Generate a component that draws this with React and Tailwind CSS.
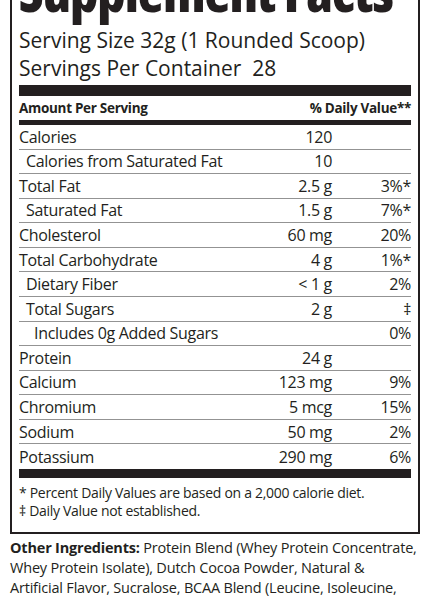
import React from 'react';

const rows = [
  { name: 'Calories', amt: '120', dv: '' },
  { name: 'Calories from Saturated Fat', amt: '10', dv: '', indent: 1 },
  { name: 'Total Fat', amt: '2.5 g', dv: '3%*' },
  { name: 'Saturated Fat', amt: '1.5 g', dv: '7%*', indent: 1 },
  { name: 'Cholesterol', amt: '60 mg', dv: '20%' },
  { name: 'Total Carbohydrate', amt: '4 g', dv: '1%*' },
  { name: 'Dietary Fiber', amt: '< 1 g', dv: '2%', indent: 1 },
  { name: 'Total Sugars', amt: '2 g', dv: '‡', indent: 1 },
  { name: 'Includes 0g Added Sugars', amt: '', dv: '0%', indent: 2 },
  { name: 'Protein', amt: '24 g', dv: '' },
  { name: 'Calcium', amt: '123 mg', dv: '9%' },
  { name: 'Chromium', amt: '5 mcg', dv: '15%' },
  { name: 'Sodium', amt: '50 mg', dv: '2%' },
  { name: 'Potassium', amt: '290 mg', dv: '6%' },
];

function Row({ row, last }) {
  const pad = row.indent === 2 ? 'pl-[15px]' : row.indent === 1 ? 'pl-[7px]' : '';
  return (
    <div
      className={`flex items-center h-[24.57px] text-[16px] tracking-[-0.3px] whitespace-nowrap ${
        last ? '' : 'border-b border-[#939393]'
      }`}
    >
      <div className={`flex-1 ${pad}`}>{row.name}</div>
      <div className="w-[100px] text-right">{row.amt}</div>
      <div className="w-[79px] text-right">{row.dv}</div>
    </div>
  );
}

export default function App() {
  return (
    <div className="w-[430px] h-[602px] overflow-hidden bg-white text-[#231f20] font-['Open_Sans',sans-serif]">
      <div className="mx-[10px] border-2 border-t-0 border-[#231f20] px-[7px] pb-[12px]">
        <div className="-mt-[34px] text-[54px] font-extrabold leading-[50px] tracking-[-1px] whitespace-nowrap font-stretch-condensed">
          Supplement Facts
        </div>
        <div className="text-[21px] leading-[28px] mt-[10px] whitespace-nowrap">Serving Size 32g (1 Rounded Scoop)</div>
        <div className="text-[21px] leading-[28px] whitespace-nowrap">Servings Per Container&nbsp; 28</div>
        <div className="h-[11px] bg-[#231f20] mt-[3px]" />
        <div className="flex items-center justify-between h-[24px] text-[13.5px] font-bold tracking-[-0.3px] whitespace-nowrap">
          <span>Amount Per Serving</span>
          <span>% Daily Value**</span>
        </div>
        <div className="h-[5px] bg-[#231f20]" />
        {rows.map((r, i) => (
          <Row key={r.name} row={r} last={i === rows.length - 1} />
        ))}
        <div className="h-[9px] bg-[#231f20]" />
        <div className="text-[14px] leading-[18px] mt-[6px] tracking-[-0.3px] whitespace-nowrap">
          <div>* Percent Daily Values are based on a 2,000 calorie diet.</div>
          <div>‡ Daily Value not established.</div>
        </div>
      </div>
      <div className="px-[10px] pt-[4px] text-[14.5px] leading-[20px] tracking-[-0.2px] whitespace-nowrap">
        <div>
          <span className="font-bold">Other Ingredients:</span> Protein Blend (Whey Protein Concentrate,
        </div>
        <div>Whey Protein Isolate), Dutch Cocoa Powder, Natural &amp;</div>
        <div>Artificial Flavor, Sucralose, BCAA Blend (Leucine, Isoleucine,</div>
        <div>Valine), Digestive Enzyme Blend (Protease, Amylase).</div>
      </div>
    </div>
  );
}
